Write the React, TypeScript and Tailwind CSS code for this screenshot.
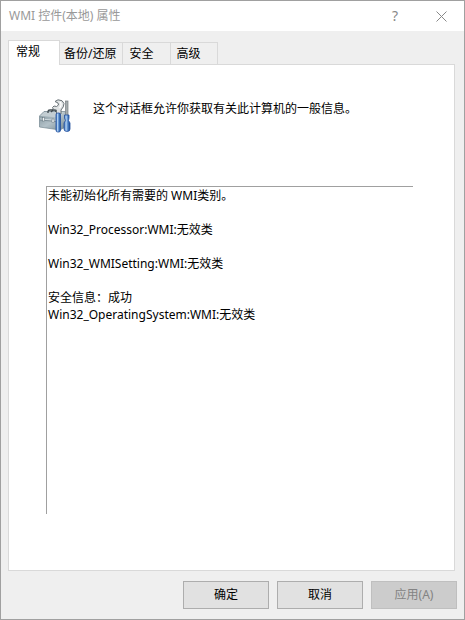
import { useState } from "react";

const tabs = ["常规", "备份/还原", "安全", "高级"];

const details = [
  "未能初始化所有需要的 WMI类别。",
  "",
  "Win32_Processor:WMI:无效类",
  "",
  "Win32_WMISetting:WMI:无效类",
  "",
  "安全信息：成功",
  "Win32_OperatingSystem:WMI:无效类",
].join("\n");

function ToolboxIcon() {
  return (
    <svg width="34" height="34" viewBox="0 0 34 34" aria-hidden="true" className="shrink-0">
      <defs>
        <linearGradient id="box" x1="0" y1="0" x2="1" y2="1">
          <stop offset="0" stopColor="#7d9099" />
          <stop offset="0.5" stopColor="#b3c1c8" />
          <stop offset="1" stopColor="#71868f" />
        </linearGradient>
        <linearGradient id="blue" x1="0" y1="0" x2="1" y2="0">
          <stop offset="0" stopColor="#2d62ae" />
          <stop offset="0.35" stopColor="#b4d3f3" />
          <stop offset="0.65" stopColor="#4a82c8" />
          <stop offset="1" stopColor="#1f4a8e" />
        </linearGradient>
      </defs>
      <path d="M0.500 17L5 12.500H26L28 14V27L21 31L0.500 28Z" fill="url(#box)" stroke="#748790" strokeWidth="0.700" />
      <path d="M1 17L5 13H25L20 18.500Z" fill="#c3ced3" />
      <path d="M9 14V12.500Q9 11 11 11H15Q17 11 17 13" fill="none" stroke="#3f494e" strokeWidth="1.300" />
      <path d="M1 20L18 21.500" stroke="#dce5e9" strokeWidth="0.800" />
      <path d="M1 21L18 22.500" stroke="#65767f" strokeWidth="0.600" />
      <rect x="3.500" y="18.500" width="2" height="3.500" fill="#f2f5f6" stroke="#5e6f78" strokeWidth="0.500" />
      <rect x="13" y="20" width="2" height="3.500" fill="#f2f5f6" stroke="#5e6f78" strokeWidth="0.500" />
      <path d="M12 13L15 10" stroke="#40494e" strokeWidth="1.200" />
      <path d="M16 2.500L19 0.800Q24 0.800 25 4.500Q25 8 22 11V15H17.500V11L14.500 10.500L13.500 8.500L15 7L17.500 7.500L19.500 6L19 4Z" fill="#dfe2e3" stroke="#697277" strokeWidth="1" />
      <path d="M21 3Q23.500 5.500 20.500 9" fill="none" stroke="#ffffff" strokeWidth="1.200" />
      <rect x="17" y="14" width="4.500" height="19" rx="1.800" fill="url(#blue)" stroke="#2452a0" strokeWidth="0.800" />
      <rect x="26.500" y="2" width="2.500" height="15" fill="#a5abad" stroke="#777e82" strokeWidth="0.700" />
      <path d="M25.500 16H30V19L29.500 21.500L31 24V30Q31 32.500 28 32.500Q25 32.500 25 30V24L26.500 21.500L25.500 19Z" fill="url(#blue)" stroke="#2452a0" strokeWidth="0.800" />
    </svg>
  );
}

export default function App() {
  const [active, setActive] = useState(0);

  return (
    <div className="flex min-h-screen flex-col border border-[#a0a0a0] bg-[#efefef] font-['Noto_Sans','Noto_Sans_CJK_SC',sans-serif] text-xs text-black">
      <header className="flex h-[30px] items-center bg-white pl-2 text-[#999999]">
        <h1 className="flex-1">WMI 控件(本地) 属性</h1>
        <button type="button" aria-label="帮助" className="flex h-[30px] w-[46px] items-center justify-center text-sm text-[#888888]">
          ?
        </button>
        <button type="button" aria-label="关闭" className="flex h-[30px] w-[46px] items-center justify-center">
          <svg width="11" height="11" viewBox="0 0 11 11" aria-hidden="true">
            <path d="M0.500 0.500L10.500 10.500M10.500 0.500L0.500 10.500" stroke="#888888" fill="none" />
          </svg>
        </button>
      </header>

      <main className="flex flex-1 flex-col px-[7px] pt-[9px]">
        <div role="tablist" className="flex items-end pr-2">
          {tabs.map((tab, i) => (
            <button
              key={tab}
              type="button"
              role="tab"
              aria-selected={i === active}
              onClick={() => setActive(i)}
              className={
                i === active
                  ? "z-10 -mb-px h-[25px] border border-b-0 border-[#d9d9d9] bg-white pr-[19px] pb-[3px] pl-[7px]"
                  : "h-[22px] border border-l-0 border-b-0 border-[#d9d9d9] bg-[#efefef] pr-4 pl-[6px] nth-2:pr-[6px] nth-2:pl-1"
              }
            >
              {tab}
            </button>
          ))}
        </div>

        <section role="tabpanel" className="mr-[2px] flex flex-1 flex-col border border-[#d9d9d9] bg-white">
          <div className="flex items-start pt-[34px] pl-[30px]">
            <ToolboxIcon />
            <p className="pt-[2px] pl-5">这个对话框允许你获取有关此计算机的一般信息。</p>
          </div>
          <textarea
            readOnly
            aria-label="WMI 信息"
            value={details}
            className="mt-[53px] mr-[41px] mb-14 ml-[37px] flex-1 resize-none border-t border-l border-[#a0a0a0] pl-px leading-[17px] outline-none"
          />
        </section>
      </main>

      <footer className="flex h-12 items-center justify-end gap-2 pr-[7px]">
        <button type="button" className="h-7 w-[86px] border border-[#adadad] bg-[#e1e1e1]">
          确定
        </button>
        <button type="button" className="h-7 w-[86px] border border-[#adadad] bg-[#e1e1e1]">
          取消
        </button>
        <button type="button" disabled className="h-7 w-[86px] border border-[#bfbfbf] bg-[#cccccc] text-[#838383]">
          应用(A)
        </button>
      </footer>
    </div>
  );
}
